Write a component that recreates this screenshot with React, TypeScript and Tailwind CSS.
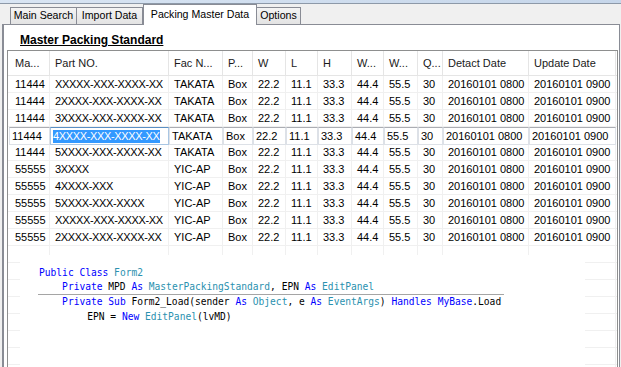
import React, { FC } from 'react';

const colWidths = [42, 119, 54, 30, 33, 32, 34, 32, 34, 25, 86, 87];
const headers = ['Ma...', 'Part NO.', 'Fac N...', 'P...', 'W', 'L', 'H', 'W...', 'W...', 'Q...', 'Detact Date', 'Update Date'];

const rest = ['Box', '22.2', '11.1', '33.3', '44.4', '55.5', '30', '20160101 0800', '20160101 0900'];

const rows: (string[] | null)[] = [
  ['11444', 'XXXXX-XXX-XXXX-XX', 'TAKATA', ...rest],
  ['11444', '2XXXX-XXX-XXXX-XX', 'TAKATA', ...rest],
  ['11444', '3XXXX-XXX-XXXX-XX', 'TAKATA', ...rest],
  null,
  ['11444', '5XXXX-XXX-XXXX-XX', 'TAKATA', ...rest],
  ['55555', '3XXXX', 'YIC-AP', ...rest],
  ['55555', '4XXXX-XXX', 'YIC-AP', ...rest],
  ['55555', '5XXXX-XXX-XXXX', 'YIC-AP', ...rest],
  ['55555', 'XXXXX-XXX-XXXX-XX', 'YIC-AP', ...rest],
  ['55555', '2XXXX-XXX-XXXX-XX', 'YIC-AP', ...rest],
];

const editValues = ['11444', '4XXXX-XXX-XXXX-XX', 'TAKATA', ...rest];

const Tab: FC<{ label: string; width: string; first?: boolean }> = ({ label, width, first }) => (
  <div
    className={`${width} h-[17px] flex items-center justify-center border-t border-r border-[#898c95] bg-gradient-to-b from-[#f4f4f4] to-[#e3e3e3] text-[10.6px] text-black ${first ? 'border-l' : ''}`}
  >
    {label}
  </div>
);

const K: FC<{ children: React.ReactNode }> = ({ children }) => <span className="text-[#0000ff]">{children}</span>;
const T: FC<{ children: React.ReactNode }> = ({ children }) => <span className="text-[#2b91af]">{children}</span>;

const App: FC = () => {
  return (
    <div className="relative w-[621px] h-[367px] overflow-hidden bg-[#f0f0f0] font-['Liberation_Sans',Arial,sans-serif] text-[11px] text-black">
      <div className="h-[3px] bg-gradient-to-r from-[#d9e5f3] to-[#c6d6ea]" />
      <div className="h-px bg-[#8d99a8]" />

      {/* tab strip */}
      <div className="flex h-[20px] items-end pl-[10px]">
        <Tab label="Main Search" width="w-[67px]" first />
        <Tab label="Import Data" width="w-[66px]" />
        <div className="relative z-10 -mb-px flex h-[21px] w-[114px] items-start justify-center border-t border-l border-r border-[#898c95] bg-white pt-[2px] text-[10.6px]">
          Packing Master Data
        </div>
        <Tab label="Options" width="w-[44px]" />
      </div>

      {/* tab page */}
      <div className="ml-[2px] mr-px h-[343px] border-t border-l-2 border-r border-[#898c95] bg-white">
        <div className="mt-[8px] ml-[16px] h-[14px] text-[12px] font-bold leading-[14px] underline">
          Master Packing Standard
        </div>

        {/* list view */}
        <div className="mt-[3px] ml-[3px] w-[611px] h-[330px] border-t border-l border-r border-[#8e8f8f] bg-white">
          <div className="flex h-[25px] border-b border-[#e5e5e5]">
            {headers.map((h, i) => (
              <div
                key={i}
                style={{ width: colWidths[i] }}
                className={`flex shrink-0 items-center border-r border-[#e5e5e5] text-[#1a1a1a] ${i === 0 ? 'pl-[7px]' : 'pl-[5px]'}`}
              >
                {h}
              </div>
            ))}
          </div>

          {rows.map((row, r) =>
            row ? (
              <div key={r} className="flex h-[17px] border-b border-[#f0f0f0]">
                {row.map((c, i) => (
                  <div
                    key={i}
                    style={{ width: colWidths[i] }}
                    className={`flex shrink-0 items-center whitespace-nowrap border-r border-[#f0f0f0] leading-[16px] ${
                      i === 0 ? 'pl-[7px]' : 'pl-[5px]'
                    } ${i === 1 ? 'tracking-[-0.35px]' : ''}`}
                  >
                    {c}
                  </div>
                ))}
              </div>
            ) : (
              <div key={r} className="relative z-10 flex h-[17px] items-start">
                {editValues.map((c, i) => (
                  <div
                    key={i}
                    style={{ width: i === 0 ? colWidths[0] - 1 : colWidths[i] }}
                    className={`flex h-[18px] shrink-0 items-center whitespace-nowrap border bg-white pl-[2px] ${
                      i === 0 ? 'ml-px' : ''
                    } ${
                      i === 1
                        ? 'border-[#a9c6e3] border-t-[#5a8fc4] tracking-[-0.35px]'
                        : 'border-[#dde1e7] border-t-[#abadb3]'
                    }`}
                  >
                    {i === 1 ? (
                      <span className="bg-[#3399ff] text-white leading-[13px]">{c}</span>
                    ) : (
                      c
                    )}
                  </div>
                ))}
              </div>
            ),
          )}

          {Array.from({ length: 8 }).map((_, r) => (
            <div key={`e${r}`} className="flex h-[17px] border-b border-[#f0f0f0]">
              {colWidths.map((w, i) => (
                <div key={i} style={{ width: w }} className="shrink-0 border-r border-[#f0f0f0]" />
              ))}
            </div>
          ))}
        </div>
      </div>

      {/* pasted code snippet */}
      <div className="absolute left-[20px] top-[255px] h-[112px] w-[565px] bg-white pt-[11px] font-['DejaVu_Sans_Mono',monospace] text-[9.6px] text-black">
        <div className="h-[14px] whitespace-pre pl-[19px] leading-[14px]">
          <K>Public</K> <K>Class</K> <T>Form2</T>
        </div>
        <div className="h-[14px] whitespace-pre pl-[19px] leading-[14px]">
          {'    '}
          <K>Private</K> MPD <K>As</K> <T>MasterPackingStandard</T>, EPN <K>As</K> <T>EditPanel</T>
        </div>
        <div className="ml-[18px] h-px w-[466px] bg-[#a5a5a5]" />
        <div className="h-[14px] whitespace-pre pl-[19px] leading-[14px]">
          {'    '}
          <K>Private</K> <K>Sub</K> Form2_Load(sender <K>As</K> <T>Object</T>, e <K>As</K> <T>EventArgs</T>){' '}
          <K>Handles</K> <K>MyBase</K>.Load
        </div>
        <div className="mt-px h-[14px] whitespace-pre pl-[21px] leading-[14px]">
          {'        '}EPN = <K>New</K> <T>EditPanel</T>(lvMD)
        </div>
      </div>
    </div>
  );
};

export default App;
